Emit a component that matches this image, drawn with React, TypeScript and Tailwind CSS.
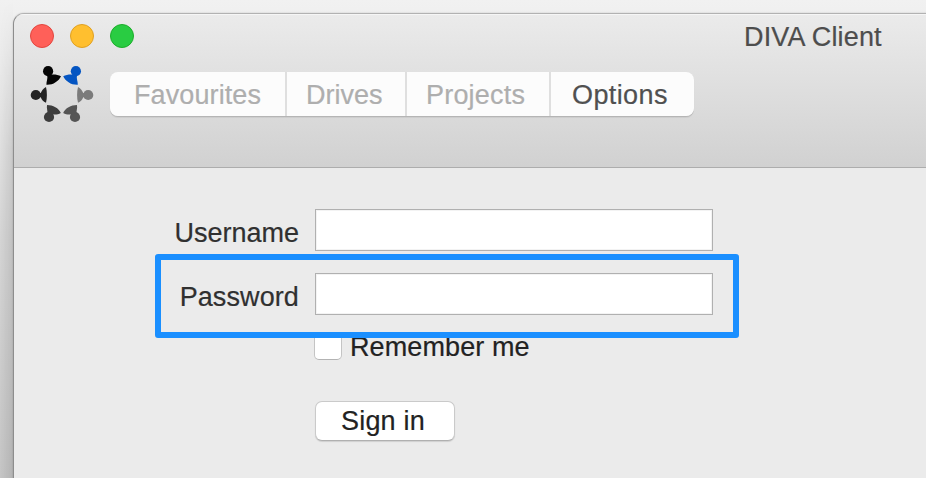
const people = [
  { head: [28.1, 15.2], fill: "#050505", body: "M41 20.3C38 18.4 33.5 18.2 31.5 18.6L27.2 19.4C28 22.5 26.3 25.2 26.4 28.8C32.8 29.2 38.6 25.5 41 20.3Z" },
  { head: [55.9, 15.2], fill: "#0455c2", body: "M43.2 20.3C46.2 18.4 50.7 18.2 52.7 18.6L57 19.4C56.2 22.5 57.9 25.2 57.8 28.8C51.4 29.2 45.6 25.5 43.2 20.3Z" },
  { head: [15.8, 39], fill: "#242424", body: "M26 31C23.2 32.2 21.6 35.2 20.8 37L19 37.2V41L20.8 41.2C21.6 43.4 23.2 45.6 26 46.8C27.2 42 27.2 35.8 26 31Z" },
  { head: [68.2, 39], fill: "#7b7b7b", body: "M58 31C60.8 32.2 62.4 35.2 63.2 37L65 37.2V41L63.2 41.2C62.4 43.4 60.8 45.6 58 46.8C56.8 42 56.8 35.8 58 31Z" },
  { head: [29, 61], fill: "#3d3d3d", body: "M27 49C26.4 52.5 27.8 55 27.4 57.4L31.6 58.2C34.5 59 38 58.7 40.8 57C38.8 52 33 49 27 49Z" },
  { head: [55, 61], fill: "#555555", body: "M57 49C57.6 52.5 56.2 55 56.6 57.4L52.4 58.2C49.5 59 46 58.7 43.2 57C45.2 52 51 49 57 49Z" },
];

function Logo() {
  return (
    <svg className="block h-[74px] w-[84px] shrink-0" viewBox="0 0 84 74">
      {people.map((p, i) => (
        <g key={i} fill={p.fill}>
          <circle cx={p.head[0]} cy={p.head[1]} r="5.1" />
          <path d={p.body} />
        </g>
      ))}
    </svg>
  );
}

const segment = "flex items-start bg-[#fcfcfc] pt-2 h-11 whitespace-nowrap";
const input =
  "block h-[42px] w-[398px] border border-[#b0b0b0] bg-white shadow-[inset_0_0_0_1px_#f3f3f3] outline-none";

export default function App() {
  return (
    <div
      className="relative flex h-[478px] w-[926px] overflow-hidden bg-[linear-gradient(#f1f1f1,#e9e9e9_70px,#d5d5d5_240px,#c6c6c6)] pt-[13px] text-[27px] leading-[30px] [-webkit-text-stroke:0.2px]"
      style={{ fontFamily: '"Liberation Sans", Arial, sans-serif' }}
    >
      <div className="-mt-[13px] h-[478px] w-[13px] shrink-0 bg-[linear-gradient(90deg,transparent,rgba(0,0,0,0.09))] [mask-image:linear-gradient(transparent,black_150px)]" />
      <div className="h-[480px] w-[930px] shrink-0 overflow-hidden rounded-tl-[11px] border-t border-l border-t-[#b2b2b2] border-l-[#8d8d8d] bg-[#ebebeb] shadow-[0_0_2px_rgba(0,0,0,0.18)]">
        <header className="h-[154px] border-b border-[#adadad] bg-[linear-gradient(#ebebeb,#d1d1d1)] shadow-[inset_0_1px_0_#f6f6f6]">
          <div className="flex h-[42px] items-start pt-[10px] pl-4">
            <div className="flex gap-4">
              <span className="h-6 w-6 rounded-full border border-[#e2463f] bg-[#ff6059]" />
              <span className="h-6 w-6 rounded-full border border-[#dfa023] bg-[#ffbf2f]" />
              <span className="h-6 w-6 rounded-full border border-[#1dad2b] bg-[#29cc42]" />
            </div>
            <h1 className="-mt-0.5 ml-[610px] text-[27px] leading-[30px] font-normal tracking-[0.15px] whitespace-nowrap text-[#4d4d4d]">DIVA Client</h1>
          </div>
          <div className="flex items-start pl-1.5">
            <Logo />
            <nav className="mt-4 ml-[6px] flex h-11 gap-0.5 overflow-hidden rounded-lg bg-[#dfdfdf] text-[#aeaeae] shadow-[0_1px_0_#b5b5b5,0_2px_1px_rgba(0,0,0,0.06)]">
              <div className={segment + " w-[175px] pl-6 tracking-[0.1px]"}>Favourites</div>
              <div className={segment + " w-[118px] pl-[19px]"}>Drives</div>
              <div className={segment + " w-[142px] pl-[19px] tracking-[0.2px]"}>Projects</div>
              <div className={segment + " w-[143px] pl-[21px] tracking-[0.4px] text-[#505050]"}>Options</div>
            </nav>
          </div>
        </header>
        <form className="pt-[41px] text-[#303030]">
          <div className="flex h-16 items-start">
            <label className="mr-4 w-[285px] pt-[9px] text-right">Username</label>
            <input className={input} />
          </div>
          <div className="flex h-[59px] items-start">
            <label className="mr-4 w-[285px] pt-[9px] text-right tracking-[0.1px]">Password</label>
            <input className={input} />
          </div>
          <div className="flex h-[69px] items-start pl-[300px] text-[#222]">
            <span className="h-7 w-7 rounded-[5px] border border-[#c4c4c4] border-b-[#b3b3b3] bg-white" />
            <label className="ml-2 tracking-[0.1px] whitespace-nowrap">Remember me</label>
          </div>
          <button
            type="button"
            className="ml-[301px] flex h-10 w-[140px] items-start rounded-[7px] border border-[#cacaca] border-b-[#b0b0b0] bg-white pt-1 pl-[25px] tracking-[0.2px] whitespace-nowrap text-[#222] shadow-[0_1px_1px_rgba(0,0,0,0.12)]"
          >
            Sign in
          </button>
        </form>
      </div>
      <div className="pointer-events-none absolute top-[254px] left-[155px] h-[84px] w-[584px] rounded-[3px] border-6 border-[#1a8fff]" />
    </div>
  );
}
